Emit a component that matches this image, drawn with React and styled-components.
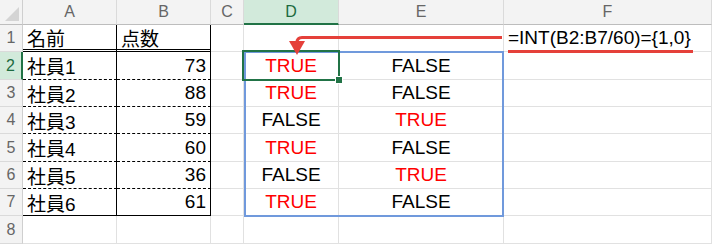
import React from 'react';
import styled, { createGlobalStyle } from 'styled-components';

// --- Estilos globales ---
const GlobalStyle = createGlobalStyle`
  html, body {
    margin: 0;
    padding: 0;
    background: #ffffff;
  }
`;

const cellFont = `"Liberation Sans", "Noto Sans CJK JP", sans-serif`;

const Sheet = styled.div`
  position: relative;
  width: 712px;
  height: 244px;
  overflow: hidden;
  background: #fff;
`;

const Grid = styled.div`
  display: grid;
  grid-template-columns: 23px 94px 94px 33px 95px 165px 1fr;
  grid-template-rows: 25px 27px 28px 27px 27px 28px 27px 27px 28px;
`;

const Corner = styled.div`
  position: relative;
  background: #f3f3f3;
  border-right: 1px solid #cfcfcf;
  border-bottom: 1px solid #bdbdbd;

  &::after {
    content: '';
    position: absolute;
    right: 3px;
    bottom: 3px;
    width: 0;
    height: 0;
    border-left: 14px solid transparent;
    border-bottom: 14px solid #d4d4d4;
  }
`;

const ColHead = styled.div`
  display: flex;
  align-items: center;
  justify-content: center;
  box-sizing: border-box;
  font-family: "Liberation Sans", sans-serif;
  font-size: 16px;
  color: ${(p) => (p.$active ? '#1d6b3f' : '#666')};
  background: ${(p) => (p.$active ? '#d2eadb' : '#f3f3f3')};
  border-right: 1px solid #dadada;
  border-bottom: ${(p) => (p.$active ? '2px solid #217346' : '1px solid #bdbdbd')};
`;

const RowHead = styled.div`
  display: flex;
  align-items: center;
  justify-content: center;
  box-sizing: border-box;
  font-family: "Liberation Sans", sans-serif;
  font-size: 16px;
  color: ${(p) => (p.$active ? '#1d6b3f' : '#666')};
  background: ${(p) => (p.$active ? '#d2eadb' : '#f3f3f3')};
  border-right: ${(p) => (p.$active ? '2px solid #217346' : '1px solid #cfcfcf')};
  border-bottom: 1px solid #dadada;
`;

const bottomBorder = {
  double: '3px double #000',
  dashed: '1px dashed #000',
  solid: '1px solid #000',
};

const Cell = styled.div`
  display: flex;
  align-items: center;
  justify-content: ${(p) => p.$align || 'flex-start'};
  box-sizing: border-box;
  padding: 0 4px;
  white-space: nowrap;
  font-family: ${cellFont};
  font-size: 19px;
  color: ${(p) => p.$color || '#000'};
  border-right: 1px solid ${(p) => (p.$boxed ? '#000' : '#e1e1e1')};
  border-bottom: ${(p) => bottomBorder[p.$bottom] || '1px solid #e1e1e1'};
`;

// rango seleccionado D2:E7
const RangeBox = styled.div`
  position: absolute;
  left: 244px;
  top: 51px;
  width: 260px;
  height: 166px;
  box-sizing: border-box;
  border: 2px solid #7099dc;
  pointer-events: none;
`;

// celda activa D2 con su controlador de relleno
const ActiveCell = styled.div`
  position: absolute;
  left: 242px;
  top: 50px;
  width: 98px;
  height: 31px;
  box-sizing: border-box;
  border: 2px solid #217346;
  pointer-events: none;

  &::after {
    content: '';
    position: absolute;
    right: -5px;
    bottom: -5px;
    width: 6px;
    height: 6px;
    background: #217346;
    border: 1px solid #fff;
  }
`;

const Annotation = styled.svg`
  position: absolute;
  left: 0;
  top: 0;
  pointer-events: none;
`;

const columns = ['A', 'B', 'C', 'D', 'E', 'F'];

const rows = [
  { a: '名前', b: '点数', f: '=INT(B2:B7/60)={1,0}' },
  { a: '社員1', b: 73, d: true, e: false },
  { a: '社員2', b: 88, d: true, e: false },
  { a: '社員3', b: 59, d: false, e: true },
  { a: '社員4', b: 60, d: true, e: false },
  { a: '社員5', b: 36, d: false, e: true },
  { a: '社員6', b: 61, d: true, e: false },
  {},
];

const boolText = (v) => (v === undefined ? '' : v ? 'TRUE' : 'FALSE');
const boolColor = (v) => (v ? '#ff0000' : '#000');

function App() {
  return (
    <Sheet>
      <GlobalStyle />
      <Grid>
        <Corner />
        {columns.map((c) => (
          <ColHead key={c} $active={c === 'D'}>{c}</ColHead>
        ))}

        {rows.map((r, i) => {
          const n = i + 1;
          const inTable = n <= 7;
          const bottom = n === 1 ? 'double' : n < 7 ? 'dashed' : n === 7 ? 'solid' : undefined;
          return (
            <React.Fragment key={n}>
              <RowHead $active={n === 2}>{n}</RowHead>
              <Cell $boxed={inTable} $bottom={inTable ? bottom : undefined}>{r.a}</Cell>
              <Cell
                $boxed={inTable}
                $bottom={inTable ? bottom : undefined}
                $align={typeof r.b === 'number' ? 'flex-end' : 'flex-start'}
              >
                {r.b}
              </Cell>
              <Cell />
              <Cell $align="center" $color={boolColor(r.d)}>{boolText(r.d)}</Cell>
              <Cell $align="center" $color={boolColor(r.e)}>{boolText(r.e)}</Cell>
              <Cell>{r.f}</Cell>
            </React.Fragment>
          );
        })}
      </Grid>

      <RangeBox />
      <ActiveCell />

      {/* flecha desde la fórmula hasta D2 y subrayado */}
      <Annotation width="712" height="244" viewBox="0 0 712 244">
        <path d="M502 37.5 H302 Q297 37.5 297 42.5" fill="none" stroke="#e5403a" strokeWidth="3" />
        <polygon points="289,41 305,41 297,55" fill="#e5403a" />
        <rect x="508" y="50" width="185" height="3" fill="#e5403a" />
      </Annotation>
    </Sheet>
  );
}

export default App;
